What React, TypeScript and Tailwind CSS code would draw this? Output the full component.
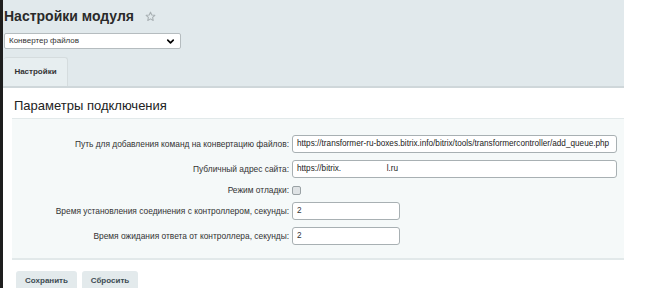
import { ChevronDown } from 'lucide-react';

const rows = [
  { label: 'Путь для добавления команд на конвертацию файлов:', value: 'https://transformer-ru-boxes.bitrix.info/bitrix/tools/transformercontroller/add_queue.php' },
  { label: 'Публичный адрес сайта:', value: 'https://bitrix.                    l.ru' },
];

export default function App() {
  return (
    <div className="w-[650px] h-[288px] bg-white flex overflow-hidden font-['Liberation_Sans',Arial,sans-serif] text-[#333]">
      <div className="w-[3px] bg-[#1e1e1e] shrink-0" />
      <div className="w-[621px] flex flex-col">
        {/* шапка */}
        <div className="h-[88px] bg-[#e1e9ec] border-b-2 border-[#cfd7da] flex flex-col">
          <div className="flex items-center h-[31px] pl-[1px] gap-[11px]">
            <h1 className="text-[14px] font-bold leading-none text-[#2a2a2a]">Настройки модуля</h1>
            <svg width="11" height="11" viewBox="0 0 24 24" className="mt-[1px]">
              <path d="M12 2.5l2.9 6.1 6.6.8-4.9 4.5 1.3 6.6L12 17.2l-5.9 3.3 1.3-6.6-4.9-4.5 6.6-.8z" fill="none" stroke="#a9b1b4" strokeWidth="2.4" strokeLinejoin="round" />
            </svg>
          </div>
          <div className="ml-[1px] mt-[2px] w-[177px] h-[16px] bg-white border border-[#b5bcbf] rounded-[2px] flex items-center justify-between px-[4px]">
            <span className="text-[8px] text-[#333]">Конвертер файлов</span>
            <ChevronDown size={11} strokeWidth={3.5} className="text-black" />
          </div>
          <div className="flex-1 flex items-end mt-[8px]">
            <div className="ml-[1px] w-[64px] h-[29px] bg-[#e7eef0] border-r border-t border-[#d5dcde] rounded-t-[3px] flex items-center justify-center">
              <span className="text-[8px] font-bold text-[#333]">Настройки</span>
            </div>
          </div>
        </div>

        {/* тело */}
        <div className="flex-1 flex flex-col">
          <h2 className="text-[13px] text-[#222] pl-[11px] pt-[8px] h-[30px]">Параметры подключения</h2>
          <div className="ml-[9px] h-[142px] bg-[#f5f9f9] border-t border-b-2 border-[#e2e9ea] flex flex-col gap-[7px] pt-[16px]">
            {rows.map((r) => (
              <div key={r.label} className="flex items-center h-[18px]">
                <div className="w-[280px] text-right text-[8.4px] pr-[3px]">{r.label}</div>
                <div className="w-[325px] h-[18px] bg-white border border-[#a8b0b3] rounded-[3px] flex items-center px-[4px] text-[8.2px] text-[#222] whitespace-pre">
                  {r.value}
                </div>
              </div>
            ))}
            <div className="flex items-center h-[9px] mt-[1px]">
              <div className="w-[280px] text-right text-[8.4px] pr-[3px]">Режим отладки:</div>
              <div className="w-[9px] h-[9px] rounded-[2px] bg-[#dfe3e5] border border-[#9aa2a5]" />
            </div>
            <div className="flex items-center h-[18px]">
              <div className="w-[280px] text-right text-[8.4px] pr-[3px]">Время установления соединения с контроллером, секунды:</div>
              <div className="w-[108px] h-[18px] bg-white border border-[#a8b0b3] rounded-[3px] flex items-center px-[4px] text-[8.2px]">2</div>
            </div>
            <div className="flex items-center h-[18px]">
              <div className="w-[280px] text-right text-[8.4px] pr-[3px]">Время ожидания ответа от контроллера, секунды:</div>
              <div className="w-[108px] h-[18px] bg-white border border-[#a8b0b3] rounded-[3px] flex items-center px-[4px] text-[8.2px]">2</div>
            </div>
          </div>
          <div className="flex gap-[5px] ml-[13px] mt-[11px]">
            <button className="w-[61px] h-[18px] bg-[#e3eaec] rounded-t-[3px] text-[8px] font-bold text-[#3c4a52] pt-[2px]">Сохранить</button>
            <button className="w-[56px] h-[18px] bg-[#e3eaec] rounded-t-[3px] text-[8px] font-bold text-[#3c4a52] pt-[2px]">Сбросить</button>
          </div>
        </div>
      </div>
    </div>
  );
}
